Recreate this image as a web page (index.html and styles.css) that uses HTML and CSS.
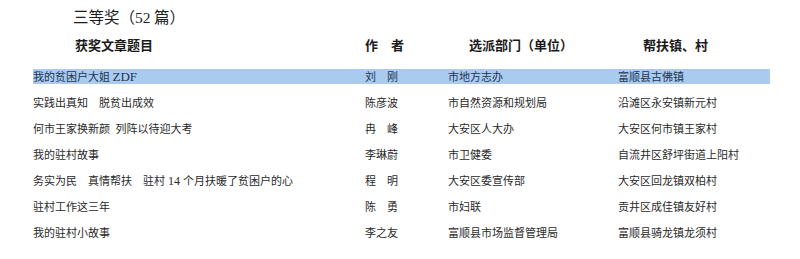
FILE: index.html
```html
<!DOCTYPE html>
<html lang="zh">
<head>
<meta charset="utf-8">
<link rel="stylesheet" href="styles.css">
</head>
<body>
<div class="page">
  <h2 class="title">三等奖（<span class="num">52</span> 篇）</h2>
  <div class="row head">
    <div class="h1">获奖文章题目</div>
    <div class="h2">作　者</div>
    <div class="h3">选派部门（单位）</div>
    <div class="h4">帮扶镇、村</div>
  </div>
  <div class="row sel">
    <div>我的贫困户大姐 <span class="lat big">ZDF</span></div>
    <div>刘　刚</div>
    <div>市地方志办</div>
    <div>富顺县古佛镇</div>
  </div>
  <div class="row">
    <div>实践出真知　脱贫出成效</div>
    <div>陈彦波</div>
    <div>市自然资源和规划局</div>
    <div>沿滩区永安镇新元村</div>
  </div>
  <div class="row">
    <div>何市王家换新颜&ensp;列阵以待迎大考</div>
    <div>冉　峰</div>
    <div>大安区人大办</div>
    <div>大安区何市镇王家村</div>
  </div>
  <div class="row">
    <div>我的驻村故事</div>
    <div>李琳蔚</div>
    <div>市卫健委</div>
    <div>自流井区舒坪街道上阳村</div>
  </div>
  <div class="row">
    <div>务实为民　真情帮扶　驻村<span class="lat"> 14 </span>个月扶暖了贫困户的心</div>
    <div>程　明</div>
    <div>大安区委宣传部</div>
    <div>大安区回龙镇双柏村</div>
  </div>
  <div class="row">
    <div>驻村工作这三年</div>
    <div>陈　勇</div>
    <div>市妇联</div>
    <div>贡井区成佳镇友好村</div>
  </div>
  <div class="row">
    <div>我的驻村小故事</div>
    <div>李之友</div>
    <div>富顺县市场监督管理局</div>
    <div>富顺县骑龙镇龙须村</div>
  </div>
</div>
</body>
</html>
```
FILE: styles.css
```css
html, body {
  margin: 0;
  padding: 0;
  background: #ffffff;
}
.page {
  padding: 7px 0 0 33px;
  width: 737px;
  font-family: "Noto Sans CJK SC", sans-serif;
  color: #2a2a2a;
}
.title {
  margin: 0 0 0 40px;
  font-family: "Noto Sans CJK SC", serif;
  font-weight: normal;
  font-size: 15.5px;
  line-height: 18px;
  color: #1e1e1e;
}
.num {
  font-family: "Liberation Serif", serif;
}
.row {
  display: grid;
  grid-template-columns: 332px 83px 170px 1fr;
  font-size: 11px;
  line-height: 15px;
  height: 15px;
  margin-bottom: 11px;
  white-space: nowrap;
}
.row.head {
  font-size: 13px;
  font-weight: bold;
  line-height: 18px;
  height: 18px;
  margin-top: 9px;
  margin-bottom: 15px;
  color: #1a1a1a;
}
.h1 { padding-left: 42px; }
.h3 { padding-left: 21px; }
.h4 { padding-left: 25px; }
.sel {
  background: #a9cbf0;
  color: #1f3550;
}
.lat {
  font-family: "Liberation Serif", serif;
  font-size: 12px;
}
.lat.big {
  font-size: 13px;
}
```
